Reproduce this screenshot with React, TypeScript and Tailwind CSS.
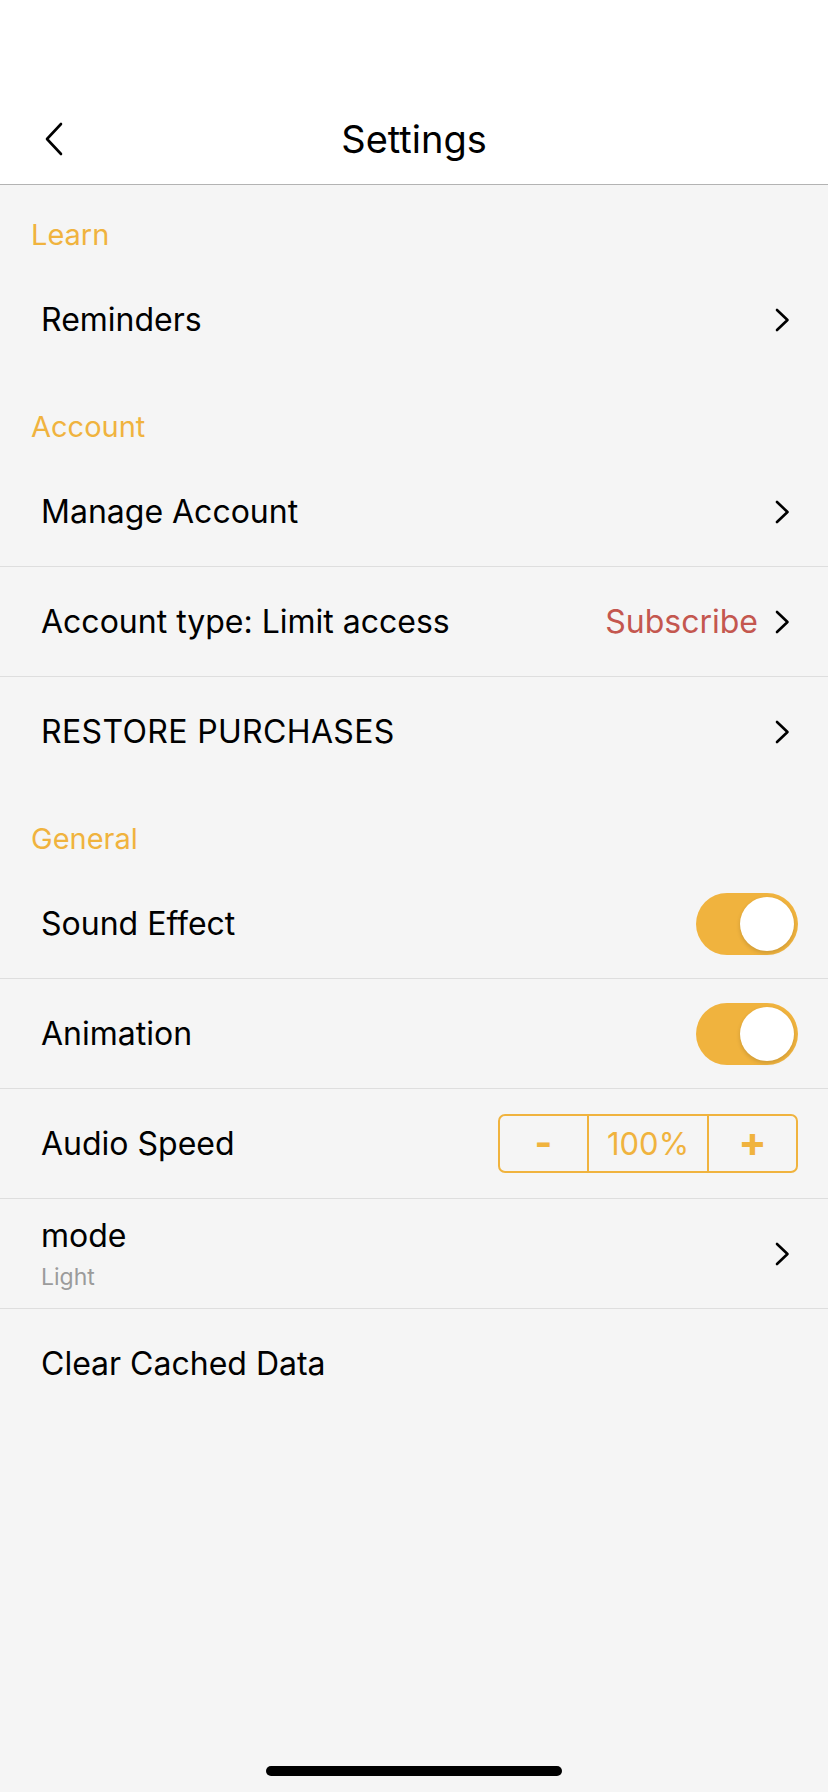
import React from "react";

const ORANGE = "text-[#f0b33e]";

const Chevron: React.FC = () => (
  <svg width="15" height="24" viewBox="0 0 15 24" fill="none" className="shrink-0">
    <path d="M2 2l10.5 10L2 22" stroke="#000" strokeWidth="2.6" strokeLinecap="round" strokeLinejoin="round" />
  </svg>
);

const Toggle: React.FC = () => (
  <div className="w-[102px] h-[62px] rounded-full bg-[#f0b33e] flex items-center justify-end pr-[4px]">
    <div className="w-[54px] h-[54px] rounded-full bg-white shadow-[0_2px_4px_rgba(0,0,0,0.15)]" />
  </div>
);

const SectionHeader: React.FC<{ label: string; first?: boolean }> = ({ label, first }) => (
  <div className={`${first ? "h-[80px]" : "h-[82px]"} flex items-end px-[31px] pb-[15px]`}>
    <span className={`text-[29px] leading-[30px] ${ORANGE}`}>{label}</span>
  </div>
);

const Row: React.FC<{ divider?: boolean; children: React.ReactNode; right?: React.ReactNode; pr?: string }> = ({
  divider,
  children,
  right,
  pr = "pr-[38px]",
}) => (
  <div
    className={`h-[110px] flex items-center justify-between pl-[41px] ${pr} ${
      divider ? "border-b border-[#dedede]" : ""
    }`}
  >
    <div className="text-[32px] leading-[40px] text-black">{children}</div>
    {right}
  </div>
);

export default function App() {
  return (
    <div
      className="w-[828px] h-[1792px] bg-[#f5f5f5] flex flex-col relative overflow-hidden"
      style={{ fontFamily: "Inter, 'Noto Sans', sans-serif" }}
    >
      {/* Nav bar */}
      <header className="bg-white pt-[93px] border-b border-[#b3b3b3]">
        <div className="h-[91px] relative flex items-center justify-center">
          <svg
            width="20"
            height="34"
            viewBox="0 0 20 34"
            fill="none"
            className="absolute left-[44px] top-[29px]"
          >
            <path d="M17 2L3 17l14 15" stroke="#000" strokeWidth="2.6" strokeLinecap="round" strokeLinejoin="round" />
          </svg>
          <h1 className="text-[38px] leading-[44px] text-black font-normal">Settings</h1>
        </div>
      </header>

      <SectionHeader label="Learn" first />
      <Row right={<Chevron />}>Reminders</Row>

      <SectionHeader label="Account" />
      <Row divider right={<Chevron />}>
        Manage Account
      </Row>
      <Row
        divider
        right={
          <div className="flex items-center gap-[17px]">
            <span className="text-[32px] leading-[40px] text-[#c4574f]">Subscribe</span>
            <Chevron />
          </div>
        }
      >
        Account type: Limit access
      </Row>
      <Row right={<Chevron />}>
        <span className="tracking-[0.35px]">RESTORE PURCHASES</span>
      </Row>

      <SectionHeader label="General" />
      <Row divider pr="pr-[30px]" right={<Toggle />}>
        Sound Effect
      </Row>
      <Row divider pr="pr-[30px]" right={<Toggle />}>
        Animation
      </Row>
      <Row
        divider
        pr="pr-[30px]"
        right={
          <div className="flex h-[59px] w-[300px] rounded-[7px] border-2 border-[#f0b33e] text-[#f0b33e]">
            <div className="w-[87px] flex items-center justify-center text-[38px] font-bold leading-none pb-[4px]">-</div>
            <div className="w-[122px] flex items-center justify-center border-x-2 border-[#f0b33e] text-[31px] leading-none">
              100%
            </div>
            <div className="flex-1 flex items-center justify-center text-[42px] font-bold leading-none pb-[4px]">+</div>
          </div>
        }
      >
        Audio Speed
      </Row>
      <Row divider right={<Chevron />}>
        <div className="flex flex-col">
          <span className="leading-[40px]">mode</span>
          <span className="mt-[6px] text-[23px] leading-[30px] text-[#9b9b9b]">Light</span>
        </div>
      </Row>
      <Row>Clear Cached Data</Row>

      {/* Home indicator */}
      <div className="absolute bottom-[16px] left-1/2 -translate-x-1/2 w-[296px] h-[10px] rounded-full bg-black" />
    </div>
  );
}
